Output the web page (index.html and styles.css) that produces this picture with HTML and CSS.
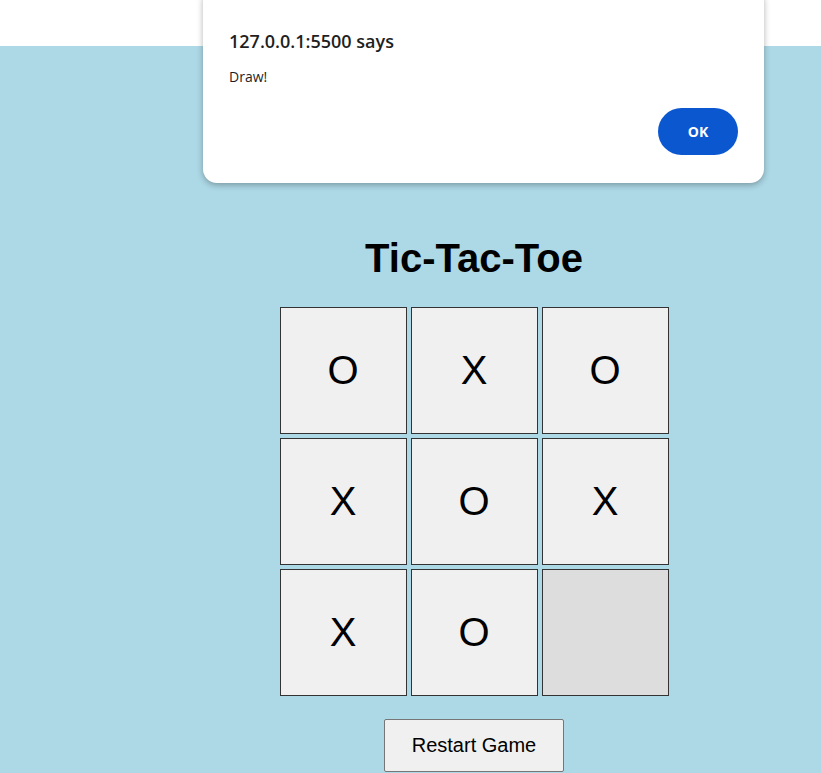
FILE: index.html
```html
<!DOCTYPE html>
<html>
<head>
<meta charset="utf-8">
<link rel="stylesheet" href="styles.css">
</head>
<body>
<div class="topbar"></div>
<main class="game">
  <h1 class="title">Tic-Tac-Toe</h1>
  <div class="board">
    <div class="cell">O</div>
    <div class="cell">X</div>
    <div class="cell">O</div>
    <div class="cell">X</div>
    <div class="cell">O</div>
    <div class="cell">X</div>
    <div class="cell">X</div>
    <div class="cell">O</div>
    <div class="cell cell-hover"></div>
  </div>
  <button class="restart">Restart Game</button>
</main>
<div class="dialog">
  <div class="dialog-title">127.0.0.1:5500 says</div>
  <div class="dialog-msg">Draw!</div>
  <div class="dialog-actions"><button class="ok">OK</button></div>
</div>
</body>
</html>
```
FILE: styles.css
```css
html, body {
  margin: 0;
  padding: 0;
  height: 100%;
  overflow: hidden;
}
body {
  background: #add8e6;
  font-family: "Liberation Sans", Arial, sans-serif;
}
.topbar {
  height: 46px;
  background: #ffffff;
}
.game {
  display: flex;
  flex-direction: column;
  align-items: center;
  padding-left: 127px;
}
.title {
  font-size: 40px;
  font-weight: bold;
  margin: 190px 0 27px;
  line-height: 44px;
  color: #000;
}
.board {
  display: grid;
  grid-template-columns: repeat(3, 127px);
  grid-auto-rows: 127px;
  gap: 4px;
}
.cell {
  background: #f0f0f0;
  border: 1px solid #333;
  display: flex;
  align-items: center;
  justify-content: center;
  font-size: 40px;
  color: #000;
}
.cell-hover {
  background: #dddddd;
}
.restart {
  margin-top: 23px;
  font-family: "Liberation Sans", Arial, sans-serif;
  font-size: 20px;
  padding: 14px 27px;
  background: #f0f0f0;
  border: 1px solid #767676;
  border-radius: 2px;
  color: #000;
}
.dialog {
  position: absolute;
  left: 203px;
  top: -12px;
  width: 561px;
  height: 195px;
  box-sizing: border-box;
  background: #fff;
  border-radius: 14px;
  box-shadow: 0 2px 6px rgba(0,0,0,0.3);
  padding: 41px 26px 0 26px;
  font-family: "Open Sans", "Noto Sans", sans-serif;
  color: #1f1f1f;
}
.dialog-title {
  font-size: 18px;
  font-weight: 600;
  line-height: 24px;
}
.dialog-msg {
  font-size: 14px;
  margin-top: 14px;
  line-height: 20px;
}
.dialog-actions {
  display: flex;
  justify-content: flex-end;
  margin-top: 21px;
}
.ok {
  width: 80px;
  height: 47px;
  border: none;
  border-radius: 24px;
  background: #0b57d0;
  color: #fff;
  font-family: "Open Sans", "Noto Sans", sans-serif;
  font-weight: bold;
  font-size: 14px;
}
```
